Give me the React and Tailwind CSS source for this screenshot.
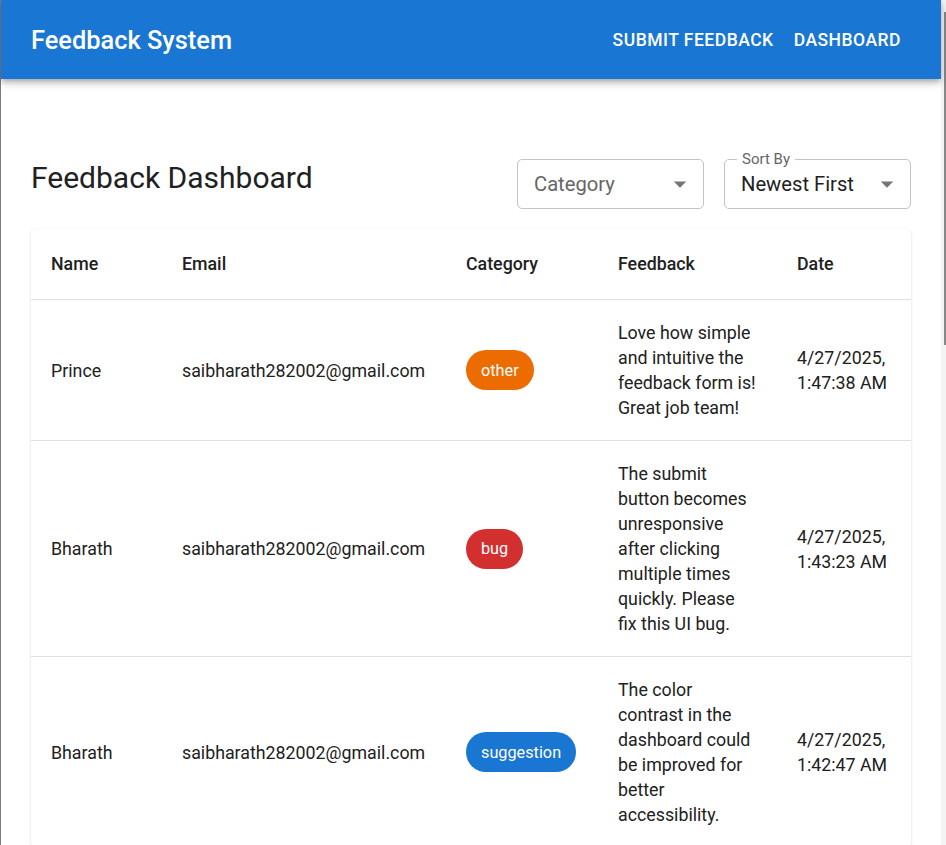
const ROWS = [
  {
    name: 'Prince',
    email: 'saibharath282002@gmail.com',
    category: 'other',
    feedback: 'Love how simple and intuitive the feedback form is! Great job team!',
    date: '4/27/2025, 1:47:38 AM',
  },
  {
    name: 'Bharath',
    email: 'saibharath282002@gmail.com',
    category: 'bug',
    feedback: 'The submit button becomes unresponsive after clicking multiple times quickly. Please fix this UI bug.',
    date: '4/27/2025, 1:43:23 AM',
  },
  {
    name: 'Bharath',
    email: 'saibharath282002@gmail.com',
    category: 'suggestion',
    feedback: 'The color contrast in the dashboard could be improved for better accessibility.',
    date: '4/27/2025, 1:42:47 AM',
  },
];

const CHIP_COLORS = {
  other: 'bg-[#ed6c02]',
  bug: 'bg-[#d32f2f]',
  suggestion: 'bg-[#1976d2]',
};

function ArrowDrop() {
  return (
    <svg width="30" height="30" viewBox="0 0 24 24" className="shrink-0">
      <path d="M7 10l5 5 5-5z" fill="rgba(0,0,0,0.54)" />
    </svg>
  );
}

function SelectBox({ label, value }) {
  return (
    <div className="relative flex h-[50px] w-[187px] items-center justify-between rounded-[5px] border border-[#c4c4c4] pl-[16px] pr-[8px]">
      {label && (
        <span className="absolute left-[12px] top-[-11px] bg-white px-[5px] text-[15px] leading-[20px] text-[#666666]">
          {label}
        </span>
      )}
      <span className={`text-[20.2px] leading-[28px] ${value ? 'text-[#212121]' : 'text-[#666666]'}`}>
        {value || 'Category'}
      </span>
      <ArrowDrop />
    </div>
  );
}

export default function App() {
  return (
    <div className="flex h-screen overflow-hidden bg-white font-['Roboto',sans-serif] text-[#212121]">
      {/* window edge */}
      <div className="w-px shrink-0 bg-[#7d7d7d]" />

      <div className="flex w-[940px] shrink-0 flex-col">
        {/* App bar */}
        <header className="relative z-10 flex h-[79px] shrink-0 items-center justify-between bg-[#1976d2] px-[30px] shadow-[0_2px_5px_-1px_rgba(0,0,0,0.2),0_5px_6px_0_rgba(0,0,0,0.14),0_1px_12px_0_rgba(0,0,0,0.12)]">
          <h1 className="pt-px text-[25.4px] font-medium leading-[32px] text-white">Feedback System</h1>
          <nav className="flex">
            <button className="px-[10px] py-[7px] text-[17.5px] font-medium uppercase leading-[30px] tracking-[0.02857em] text-white">
              Submit Feedback
            </button>
            <button className="px-[10px] py-[7px] text-[17.5px] font-medium uppercase leading-[30px] tracking-[0.02857em] text-white">
              Dashboard
            </button>
          </nav>
        </header>

        {/* Content */}
        <main className="px-[30px] pt-[80px]">
          <div className="mb-[20px] flex items-start justify-between">
            <h2 className="text-[30px] font-normal leading-[38px]">Feedback Dashboard</h2>
            <div className="flex gap-[20px]">
              <SelectBox />
              <SelectBox label="Sort By" value="Newest First" />
            </div>
          </div>

          <div className="overflow-hidden rounded-[5px] bg-white shadow-[0_2px_1px_-1px_rgba(0,0,0,0.2),0_1px_1px_0_rgba(0,0,0,0.14),0_1px_3px_0_rgba(0,0,0,0.12)]">
            <table className="w-full table-fixed border-collapse text-left text-[17.8px]">
              <colgroup>
                <col className="w-[131px]" />
                <col className="w-[284px]" />
                <col className="w-[152px]" />
                <col className="w-[179px]" />
                <col className="w-[134px]" />
              </colgroup>
              <thead>
                <tr className="border-b border-[#e0e0e0]">
                  {['Name', 'Email', 'Category', 'Feedback', 'Date'].map((h) => (
                    <th key={h} className="p-[20px] align-middle font-medium leading-[30px]">
                      {h}
                    </th>
                  ))}
                </tr>
              </thead>
              <tbody>
                {ROWS.map((r, i) => (
                  <tr key={i} className="border-b border-[#e0e0e0]">
                    <td className="p-[20px] align-middle leading-[25px]">{r.name}</td>
                    <td className="p-[20px] align-middle leading-[25px]">{r.email}</td>
                    <td className="p-[20px] align-middle leading-[25px]">
                      <span
                        className={`inline-flex h-[40px] items-center rounded-full px-[15px] text-[16.25px] text-white ${CHIP_COLORS[r.category]}`}
                      >
                        {r.category}
                      </span>
                    </td>
                    <td className="p-[20px] align-middle leading-[25px]">{r.feedback}</td>
                    <td className="p-[20px] align-middle leading-[25px]">{r.date}</td>
                  </tr>
                ))}
              </tbody>
            </table>
          </div>
        </main>
      </div>

      {/* scrollbar strip */}
      <div className="flex w-[5px] shrink-0 justify-end bg-[#f4f4f4] pt-[12px]">
        <div className="h-[333px] w-[2px] bg-[#888888]" />
      </div>
    </div>
  );
}
